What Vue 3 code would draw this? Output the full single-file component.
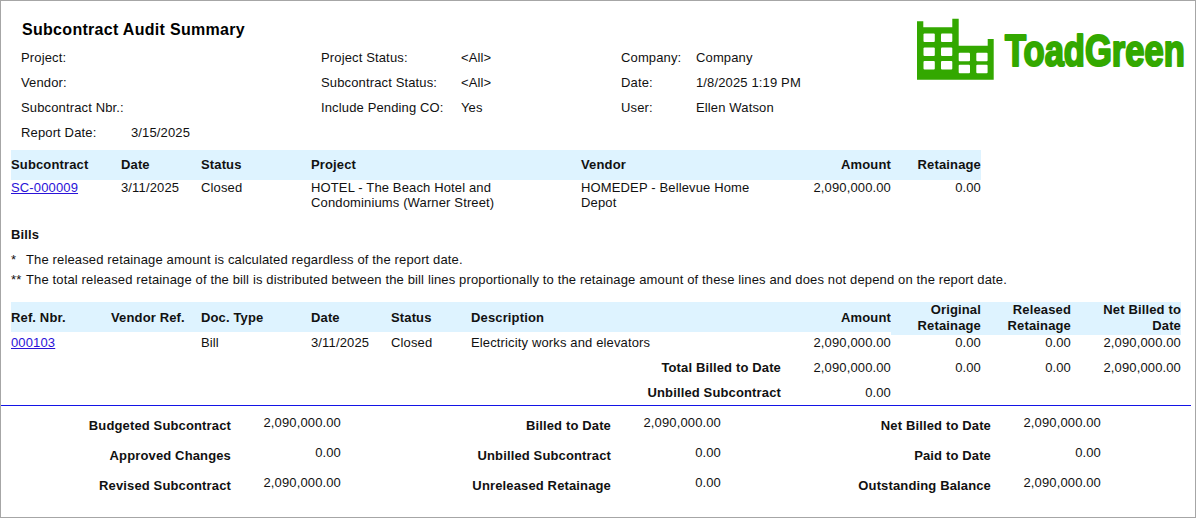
<script setup>
const params = [
  [['Project:', ''], ['Project Status:', '<All>'], ['Company:', 'Company']],
  [['Vendor:', ''], ['Subcontract Status:', '<All>'], ['Date:', '1/8/2025 1:19 PM']],
  [['Subcontract Nbr.:', ''], ['Include Pending CO:', 'Yes'], ['User:', 'Ellen Watson']],
  [['Report Date:', '3/15/2025']],
]
const summary = [
  [['Budgeted Subcontract', '2,090,000.00'], ['Billed to Date', '2,090,000.00'], ['Net Billed to Date', '2,090,000.00']],
  [['Approved Changes', '0.00'], ['Unbilled Subcontract', '0.00'], ['Paid to Date', '0.00']],
  [['Revised Subcontract', '2,090,000.00'], ['Unreleased Retainage', '0.00'], ['Outstanding Balance', '2,090,000.00']],
]
const windows = [
  [923.5, 33.5], [941, 33.5], [923.5, 47.5], [941, 47.5], [923.5, 61], [941, 61],
  [958.7, 52.8], [976.3, 52.8], [958.7, 64.8], [976.3, 64.8],
]
</script>

<template>
  <main class="report">
    <header class="head">
      <h1 class="title">Subcontract Audit Summary</h1>
      <div class="params">
        <div v-for="(row, r) in params" :key="r" class="param-row">
          <div v-for="(p, i) in row" :key="i" class="param" :class="'param-' + i">
            <span class="p-label">{{ p[0] }}</span><span class="p-value">{{ p[1] }}</span>
          </div>
        </div>
      </div>
      <svg class="logo" width="280" height="70" viewBox="915 15 280 70" role="img" aria-label="ToadGreen logo">
        <path fill="#33a800" d="M917 79.700V21.300h6.300v6H952.300V18.700h6.400V45.700H987.700V39H993.700V79.700Z"/>
        <rect v-for="(w, i) in windows" :key="i" :x="w[0]" :y="w[1]" width="11.300" height="8.400" rx="1" fill="#fff"/>
        <text class="logo-text" transform="translate(1005 65.500) scale(0.785 1)">ToadGreen</text>
      </svg>
    </header>

    <section class="sub-table">
      <div class="t1-row t1-head">
        <span>Subcontract</span><span>Date</span><span>Status</span><span>Project</span><span>Vendor</span>
        <span class="num">Amount</span><span class="num">Retainage</span>
      </div>
      <div class="t1-row t1-body">
        <a class="link" href="#">SC-000009</a><span>3/11/2025</span><span>Closed</span>
        <span>HOTEL - The Beach Hotel and Condominiums (Warner Street)</span>
        <span class="vendor">HOMEDEP - Bellevue Home Depot</span>
        <span class="num">2,090,000.00</span><span class="num">0.00</span>
      </div>
    </section>

    <h2 class="bills">Bills</h2>
    <div class="notes">
      <p class="note"><span class="mark">*</span>The released retainage amount is calculated regardless of the report date.</p>
      <p class="note"><span class="mark">**</span>The total released retainage of the bill is distributed between the bill lines proportionally to the retainage amount of these lines and does not depend on the report date.</p>
    </div>

    <section class="bill-table">
      <div class="t2-row t2-head">
        <span class="hc">Ref. Nbr.</span><span class="hc">Vendor Ref.</span><span class="hc">Doc. Type</span><span class="hc">Date</span><span class="hc">Status</span><span class="hc">Description</span>
        <span class="hc num">Amount</span>
        <span class="hw num">Original Retainage</span><span class="hw num">Released Retainage</span><span class="hw num">Net Billed to Date</span>
      </div>
      <div class="t2-row t2-body">
        <a class="link" href="#">000103</a><span></span><span>Bill</span><span>3/11/2025</span><span>Closed</span><span>Electricity works and elevators</span>
        <span class="num">2,090,000.00</span><span class="num">0.00</span><span class="num">0.00</span><span class="num">2,090,000.00</span>
      </div>
      <div class="t2-row t2-total">
        <b class="total-label">Total Billed to Date</b>
        <span class="num">2,090,000.00</span><span class="num">0.00</span><span class="num">0.00</span><span class="num">2,090,000.00</span>
      </div>
      <div class="t2-row t2-total">
        <b class="total-label">Unbilled Subcontract</b>
        <span class="num">0.00</span>
      </div>
    </section>

    <section class="summary">
      <div v-for="(row, r) in summary" :key="r" class="sum-row">
        <div v-for="(s, i) in row" :key="i" class="sum-cell">
          <b class="sum-label">{{ s[0] }}</b><span class="sum-value">{{ s[1] }}</span>
        </div>
      </div>
    </section>
  </main>
</template>

<style>
html, body { margin: 0; background: #fff; }
</style>

<style scoped>
.report {
  box-sizing: border-box;
  width: 1196px;
  height: 518px;
  border: 1px solid #a6a6a6;
  background: #fff;
  color: #111;
  font: 13px/15px "Liberation Sans", Arial, sans-serif;
  letter-spacing: 0.14px;
  overflow: hidden;
}
.head { position: relative; height: 149px; padding-left: 20px; box-sizing: border-box; }
.title {
  margin: 0 0 0 1px;
  padding-top: 20px;
  font-size: 16px;
  line-height: 18px;
  font-weight: 700;
  letter-spacing: 0.3px;
  color: #000;
}
.params { margin-top: 6px; }
.param-row { display: flex; height: 25px; align-items: center; }
.param { display: flex; flex: none; width: 300px; }
.p-label { flex: none; width: 110px; }
.param-1 .p-label { width: 140px; }
.param-2 .p-label { width: 75px; }
.logo { position: absolute; left: 914px; top: 14px; }
.logo-text {
  font-family: "Liberation Sans", Arial, sans-serif;
  font-weight: 700;
  font-size: 44px;
  letter-spacing: 0;
  fill: #33a800;
  stroke: #33a800;
  stroke-width: 2px;
  stroke-linejoin: round;
  vector-effect: non-scaling-stroke;
}
.sub-table { margin-left: 10px; width: 970px; }
.t1-row {
  display: grid;
  grid-template-columns: 110px 80px 110px 270px 220px 90px 90px;
}
.t1-head { height: 30px; line-height: 29px; background: #def3ff; font-weight: 700; }
.t1-body { height: 30px; }
.vendor { padding-right: 30px; }
.num { text-align: right; }
.link { color: #2a12d8; text-decoration: underline; }
.bills { margin: 17px 0 0 10px; font-size: 13px; line-height: 15px; font-weight: 700; }
.notes { margin: 10px 0 0 10px; }
.note { margin: 0 0 5px; display: flex; }
.mark { flex: none; width: 15px; }
.bill-table { margin: 15px 0 0 10px; width: 1170px; }
.t2-row {
  display: grid;
  grid-template-columns: 100px 90px 110px 80px 80px 330px 90px 90px 90px 110px;
}
.t2-head { height: 33px; font-weight: 700; }
.hc { height: 30px; line-height: 31px; background: #def3ff; }
.hw { height: 33px; line-height: 16px; background: #def3ff; }
.t2-body { height: 20px; }
.t2-total { height: 25px; align-items: center; }
.total-label { grid-column: 1 / 7; text-align: right; padding-right: 20px; }
.summary { border-top: 1px solid #1414e6; margin-right: 4px; }
.sum-row { display: flex; height: 30px; }
.sum-row:first-child { margin-top: 4px; }
.sum-cell { display: flex; flex: none; width: 380px; }
.sum-label { flex: none; width: 230px; text-align: right; padding-top: 8px; }
.sum-value { flex: none; width: 110px; text-align: right; padding-top: 5px; }
</style>
